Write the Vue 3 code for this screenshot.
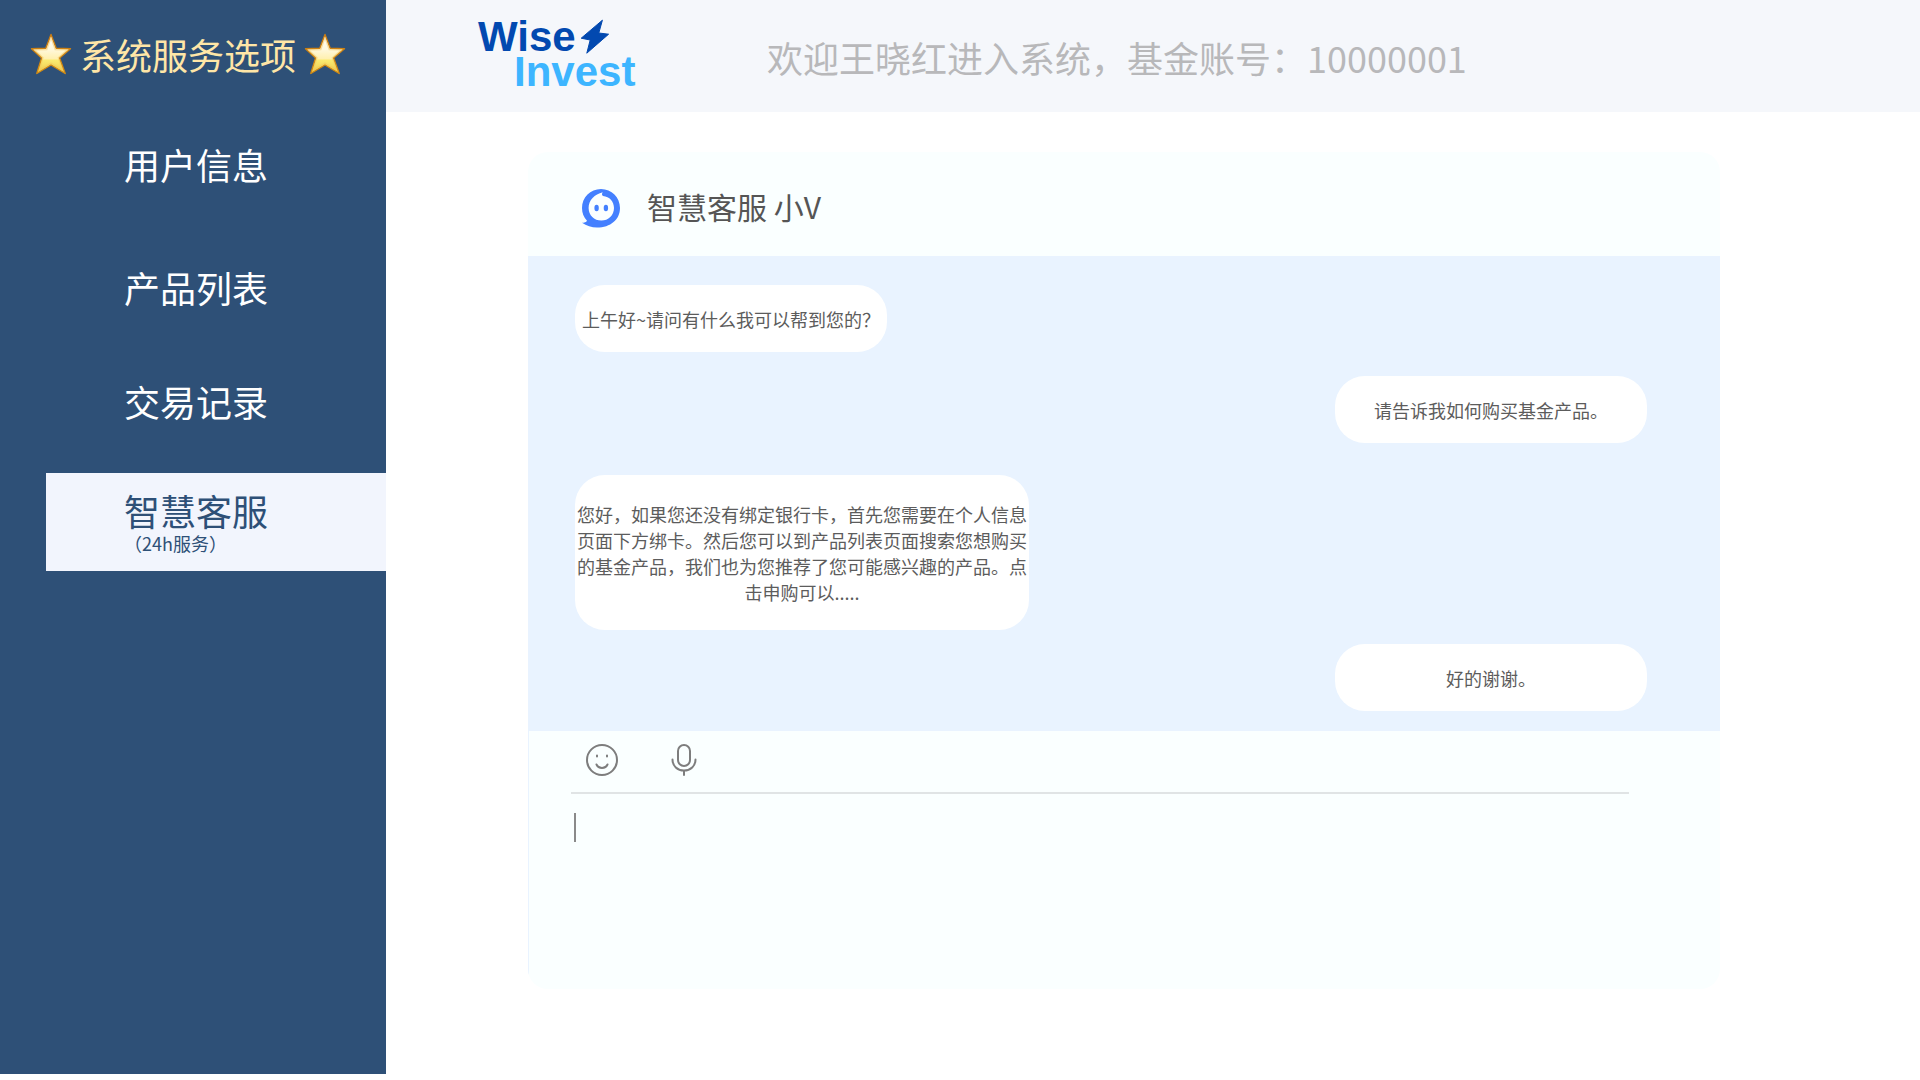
<script setup>
import { ref } from 'vue'

const navItems = [
  { label: '用户信息' },
  { label: '产品列表' },
  { label: '交易记录' },
  { label: '智慧客服', note: '（24h服务）', active: true },
]

const messages = [
  { from: 'service', text: '上午好~请问有什么我可以帮到您的？' },
  { from: 'user', text: '请告诉我如何购买基金产品。' },
  {
    from: 'service',
    long: true,
    text: '您好，如果您还没有绑定银行卡，首先您需要在个人信息页面下方绑卡。然后您可以到产品列表页面搜索您想购买的基金产品，我们也为您推荐了您可能感兴趣的产品。点击申购可以.....',
  },
  { from: 'user', text: '好的谢谢。' },
]

const draft = ref('')
</script>

<template>
  <div class="page">
    <aside class="sidebar">
      <svg class="defs" width="0" height="0" aria-hidden="true">
        <defs>
          <linearGradient id="starFill" x1="0" y1="0" x2="0" y2="1">
            <stop offset="0" stop-color="#ffffff" />
            <stop offset="0.38" stop-color="#fff8dc" />
            <stop offset="0.62" stop-color="#fff0b0" />
            <stop offset="0.66" stop-color="#faea70" />
            <stop offset="1" stop-color="#edc84a" />
          </linearGradient>
          <linearGradient id="starEdge" x1="0" y1="0" x2="0" y2="1">
            <stop offset="0" stop-color="#c97a10" />
            <stop offset="1" stop-color="#d08a14" />
          </linearGradient>
        </defs>
      </svg>
      <h1 class="sidebar-title">
        <svg v-for="n in 2" :key="n" class="star" :class="{ last: n === 2 }" viewBox="0 0 42 42" aria-hidden="true">
          <path d="M21 1.5 26.2 15.3 40.5 15.8 29.6 25 35.2 40.5 21 32 6.8 40.5 11.6 25 1.5 15.8 15.8 15.3Z" fill="url(#starFill)" stroke="url(#starEdge)" stroke-width="1.4" stroke-linejoin="round" />
          <path d="M21 5 25.2 16.6 37.2 17 28.3 24.7 32.8 37.3 21 30.2 9.2 37.3 13 24.7 4.8 17 16.8 16.6Z" fill="none" stroke="#f2c55a" stroke-opacity="0.5" stroke-width="1.2" />
        </svg>
        <span>系统服务选项</span>
      </h1>
      <nav class="nav">
        <a v-for="item in navItems" :key="item.label" href="#" class="nav-item" :class="{ active: item.active }">
          <span class="nav-label">{{ item.label }}</span>
          <span v-if="item.note" class="nav-note">{{ item.note }}</span>
        </a>
      </nav>
    </aside>

    <div class="content">
      <header class="topbar">
        <div class="logo">
          <div class="logo-row">
            <span class="wise">Wise</span>
            <svg class="bolt" viewBox="0 0 30 36" aria-hidden="true">
              <path d="M22.4 1.2 1.2 19.2 10.2 21 6.8 34.2 28.6 15.2 18.8 14Z" fill="#0249b0" stroke="#0249b0" stroke-width="1" stroke-linejoin="round" />
            </svg>
          </div>
          <span class="invest">Invest</span>
        </div>
        <p class="welcome">欢迎王晓红进入系统，基金账号：10000001</p>
      </header>

      <main class="chat">
        <header class="chat-head">
          <svg class="avatar" viewBox="0 0 38 39" aria-hidden="true">
            <path d="M19 0C29.600 0 38 8.400 38 19C38 30.500 28.500 38.600 15 38.600C9.500 38.600 4.500 37 0 33.800C2.400 33.800 4.200 33.100 5 31.700C1.800 28.400 0 24 0 19C0 8.400 8.400 0 19 0Z" fill="#4480ff" />
            <path d="M20.800 3.200C19.600 4.700 19.800 6.200 21 7C27.500 7.600 32 12.500 32 19C32 26.200 26.400 31.600 19.300 31.600C12.200 31.600 6.600 26.200 6.600 19C6.600 11 12.500 5.200 20.800 3.200Z" fill="#fbffff" />
            <ellipse cx="14.600" cy="19" rx="2.200" ry="3.200" fill="#4480ff" />
            <ellipse cx="23.900" cy="19" rx="2.200" ry="3.200" fill="#4480ff" />
          </svg>
          <h2>智慧客服 小V</h2>
        </header>

        <section class="messages">
          <p v-for="(m, i) in messages" :key="i" class="bubble" :class="[m.from, { long: m.long }]">{{ m.text }}</p>
        </section>

        <section class="composer">
          <div class="tools">
            <button type="button" aria-label="表情">
              <svg viewBox="0 0 32 32" fill="none" stroke="#7d7d7d" stroke-width="2" stroke-linecap="round">
                <circle cx="16" cy="16" r="15" />
                <path d="M10.500 20.500C12.500 25 19.500 25 21.500 20.500M11 11.400V12.600M21 11.400V12.600" />
              </svg>
            </button>
            <button type="button" aria-label="语音">
              <svg viewBox="0 0 32 32" fill="none" stroke="#7d7d7d" stroke-width="2" stroke-linecap="round">
                <rect x="10" y="1" width="12" height="21" rx="6" />
                <path d="M4.500 15.500C4.500 22 9.500 26.500 16 26.500S27.500 22 27.500 15.500M16 26.500V31" />
              </svg>
            </button>
          </div>
          <div class="entry">
            <span class="caret" aria-hidden="true"></span>
            <textarea v-model="draft" aria-label="输入消息"></textarea>
          </div>
        </section>
      </main>
    </div>
  </div>
</template>

<style>
body {
  margin: 0;
  background: #fff;
}
</style>

<style scoped>
.page {
  display: flex;
  align-items: flex-start;
  min-height: 100vh;
  font-family: "Noto Sans CJK SC", "Noto Sans", sans-serif;
}

.sidebar {
  flex: 0 0 386px;
  min-height: calc(100vh - 6px);
  background: #2e5077;
}

.defs {
  position: absolute;
}

.sidebar-title {
  display: flex;
  align-items: center;
  gap: 8px;
  height: 108px;
  margin: 0;
  padding-left: 30px;
  color: #ffe6a7;
  font-size: 36px;
  font-weight: 400;
  line-height: 52px;
}

.star {
  width: 42px;
  height: 42px;
}

.star.last {
  order: 1;
}

.nav {
  display: flex;
  flex-direction: column;
  padding-top: 34px;
}

.nav-item {
  display: flex;
  flex-direction: column;
  justify-content: center;
  padding-left: 124px;
  color: #fff;
  font-size: 36px;
  line-height: 44px;
  text-decoration: none;
}

.nav-item:nth-child(2) {
  margin-top: 79px;
}

.nav-item:nth-child(3) {
  margin-top: 70px;
}

.nav-item.active {
  height: 98px;
  margin: 50px 0 0 46px;
  padding: 0 0 4px 78px;
  box-sizing: border-box;
  background: #f2f5fd;
  color: #2e5077;
}

.nav-item.active .nav-label {
  line-height: 46px;
}

.nav-item .nav-note {
  font-size: 18px;
  line-height: 20px;
}

.content {
  flex: 1;
  min-width: 0;
}

.topbar {
  display: flex;
  height: 112px;
  background: #f5f7fb;
}

.logo {
  width: 289px;
  padding: 19px 0 0 92px;
  font-family: "Liberation Sans", Arial, sans-serif;
  font-size: 42px;
  font-weight: 700;
  line-height: 35px;
}

.logo-row {
  display: flex;
  gap: 4px;
  height: 35px;
}

.wise {
  color: #0249b0;
}

.bolt {
  width: 30px;
  height: 36px;
}

.invest {
  display: block;
  padding-left: 36px;
  color: #3db5ff;
}

.welcome {
  margin: 0;
  color: #b8b8ba;
  font-size: 36px;
  line-height: 114px;
  white-space: nowrap;
}

.chat {
  margin: 40px 200px 0 142px;
  border-radius: 20px;
  background: #faffff;
  overflow: hidden;
}

.chat-head {
  display: flex;
  align-items: center;
  gap: 27px;
  height: 104px;
  padding: 8px 54px 0;
  box-sizing: border-box;
}

.avatar {
  width: 38px;
  height: 39px;
}

.chat-head h2 {
  margin: 0;
  padding-bottom: 4px;
  color: #555;
  font-size: 30px;
  font-weight: 400;
  line-height: 44px;
}

.messages {
  display: flex;
  flex-direction: column;
  align-items: flex-start;
  gap: 24px;
  padding: 29px 73px 20px 47px;
  background: #e9f3ff;
}

.bubble {
  width: 312px;
  margin: 0;
  padding: 21px 2px 20px;
  box-sizing: border-box;
  border-radius: 30px;
  background: #fff;
  color: #5c5c5c;
  font-size: 18px;
  line-height: 26px;
  text-align: center;
}

.bubble.user {
  align-self: flex-end;
}

.bubble.long {
  width: 454px;
  margin: 8px 0 -10px;
  padding: 26px 2px 25px;
}

.composer {
  border-left: 1px solid #e9f3ff;
}

.tools {
  display: flex;
  gap: 50px;
  margin: 0 91px 0 42px;
  padding: 13px 15px 16px;
  border-bottom: 2px solid #e0e4e5;
}

.tools button {
  width: 32px;
  height: 32px;
  padding: 0;
  border: 0;
  background: none;
}

.tools svg {
  display: block;
}

.entry {
  display: flex;
  height: 176px;
  margin: 0 91px 0 45px;
  padding-top: 19px;
}

.caret {
  width: 2px;
  height: 29px;
  background: #8a8a8a;
}

textarea {
  flex: 1;
  padding: 0 8px;
  border: 0;
  outline: 0;
  resize: none;
  background: transparent;
  color: #5c5c5c;
  font: inherit;
  font-size: 18px;
  line-height: 29px;
}
</style>
